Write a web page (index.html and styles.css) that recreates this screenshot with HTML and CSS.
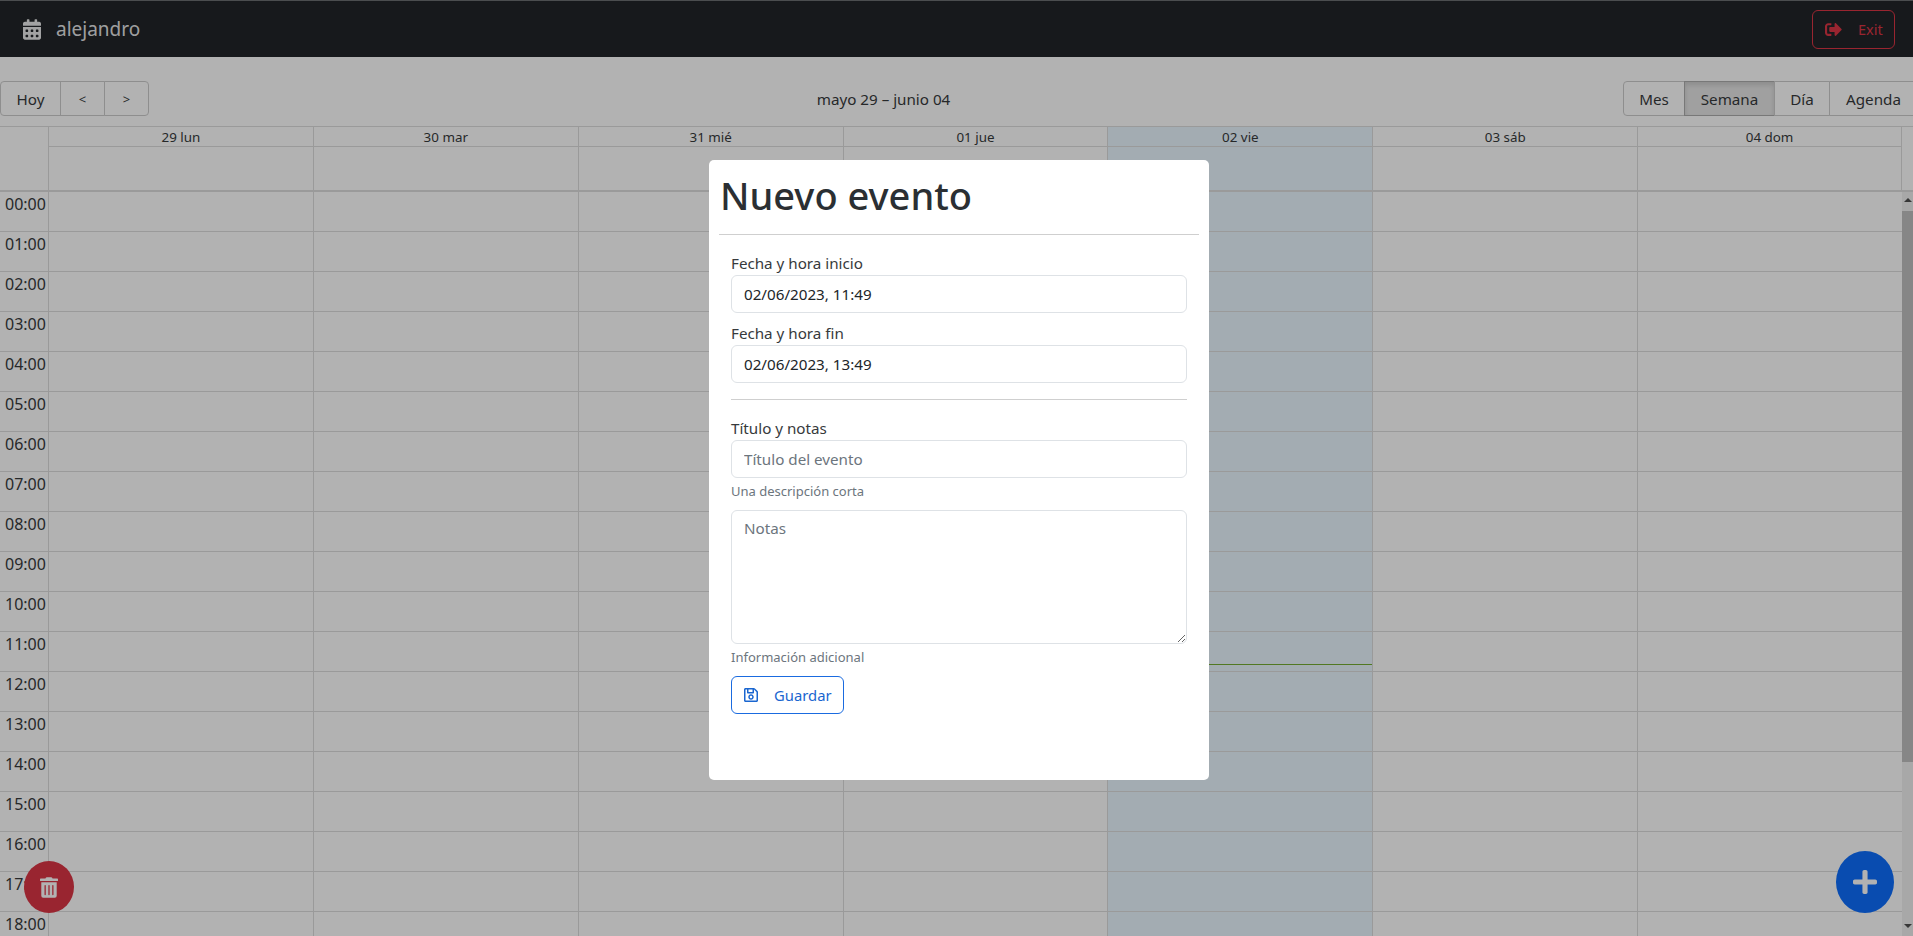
FILE: index.html
```html
<!DOCTYPE html>
<html lang="es">
<head>
<meta charset="UTF-8" />
<meta name="viewport" content="width=device-width, initial-scale=1.0" />
<title>Calendario</title>
<link rel="stylesheet" href="styles.css">
</head>
<body>
  <nav class="navbar">
    <span class="brand">
      <svg class="icon-calendar" viewBox="0 0 448 512"><path d="M0 464c0 26.500 21.500 48 48 48h352c26.500 0 48-21.500 48-48V192H0v272zm320-196c0-6.600 5.400-12 12-12h40c6.600 0 12 5.400 12 12v40c0 6.600-5.400 12-12 12h-40c-6.600 0-12-5.400-12-12v-40zm0 128c0-6.600 5.400-12 12-12h40c6.600 0 12 5.400 12 12v40c0 6.600-5.400 12-12 12h-40c-6.600 0-12-5.400-12-12v-40zM192 268c0-6.600 5.400-12 12-12h40c6.600 0 12 5.400 12 12v40c0 6.600-5.400 12-12 12h-40c-6.600 0-12-5.400-12-12v-40zm0 128c0-6.600 5.400-12 12-12h40c6.600 0 12 5.400 12 12v40c0 6.600-5.400 12-12 12h-40c-6.600 0-12-5.400-12-12v-40zM64 268c0-6.600 5.400-12 12-12h40c6.600 0 12 5.400 12 12v40c0 6.600-5.400 12-12 12H76c-6.600 0-12-5.400-12-12v-40zm0 128c0-6.600 5.400-12 12-12h40c6.600 0 12 5.400 12 12v40c0 6.600-5.400 12-12 12H76c-6.600 0-12-5.400-12-12v-40zM400 64h-48V16c0-8.800-7.200-16-16-16h-32c-8.800 0-16 7.200-16 16v48H160V16c0-8.800-7.200-16-16-16h-32c-8.800 0-16 7.200-16 16v48H48C21.500 64 0 85.500 0 112v48h448v-48c0-26.500-21.500-48-48-48z"/></svg>
      alejandro
    </span>
    <button class="btn-exit">
      <svg class="icon-exit" viewBox="0 0 512 512"><path d="M497 273L329 441c-15 15-41 4.500-41-17v-96H152c-13.300 0-24-10.700-24-24v-96c0-13.300 10.700-24 24-24h136V88c0-21.400 25.900-32 41-17l168 168c9.300 9.400 9.300 24.600 0 34zM192 436v-40c0-6.600-5.400-12-12-12H96c-17.700 0-32-14.300-32-32V160c0-17.700 14.300-32 32-32h84c6.600 0 12-5.400 12-12V76c0-6.600-5.400-12-12-12H96c-53 0-96 43-96 96v192c0 53 43 96 96 96h84c6.600 0 12-5.400 12-12z"/></svg>
      <span>Exit</span>
    </button>
  </nav>

  <div class="toolbar">
    <div class="btn-group">
      <button class="tool-btn btn-hoy">Hoy</button>
      <button class="tool-btn btn-arrow">&lt;</button>
      <button class="tool-btn btn-arrow">&gt;</button>
    </div>
    <span class="toolbar-label">mayo 29 – junio 04</span>
    <div class="btn-group">
      <button class="tool-btn btn-mes">Mes</button>
      <button class="tool-btn btn-semana active">Semana</button>
      <button class="tool-btn btn-dia">Día</button>
      <button class="tool-btn btn-agenda">Agenda</button>
    </div>
  </div>

  <div class="time-header">
    <div class="header-gutter"></div>
    <div class="header-day"><div class="header-date">29 lun</div><div class="header-allday"></div></div>
    <div class="header-day"><div class="header-date">30 mar</div><div class="header-allday"></div></div>
    <div class="header-day"><div class="header-date">31 mié</div><div class="header-allday"></div></div>
    <div class="header-day"><div class="header-date">01 jue</div><div class="header-allday"></div></div>
    <div class="header-day today"><div class="header-date">02 vie</div><div class="header-allday"></div></div>
    <div class="header-day"><div class="header-date">03 sáb</div><div class="header-allday"></div></div>
    <div class="header-day header-last"><div class="header-date">04 dom</div><div class="header-allday"></div></div>
  </div>

  <div class="time-body">
    <div class="gutter">
      <div class="slot">00:00</div>
      <div class="slot">01:00</div>
      <div class="slot">02:00</div>
      <div class="slot">03:00</div>
      <div class="slot">04:00</div>
      <div class="slot">05:00</div>
      <div class="slot">06:00</div>
      <div class="slot">07:00</div>
      <div class="slot">08:00</div>
      <div class="slot">09:00</div>
      <div class="slot">10:00</div>
      <div class="slot">11:00</div>
      <div class="slot">12:00</div>
      <div class="slot">13:00</div>
      <div class="slot">14:00</div>
      <div class="slot">15:00</div>
      <div class="slot">16:00</div>
      <div class="slot">17:00</div>
      <div class="slot">18:00</div>
    </div>
    <div class="days">
      <div class="day"></div>
      <div class="day"></div>
      <div class="day"></div>
      <div class="day"></div>
      <div class="day today"><div class="now-line"></div></div>
      <div class="day"></div>
      <div class="day"></div>
    </div>
    <div class="scrollbar">
      <span class="arrow-up"></span>
      <div class="thumb"></div>
      <span class="arrow-down"></span>
    </div>
  </div>

  <button class="fab fab-delete">
    <svg class="icon-trash" viewBox="0 0 448 512"><path d="M32 464a48 48 0 0 0 48 48h288a48 48 0 0 0 48-48V128H32zm272-256a16 16 0 0 1 32 0v224a16 16 0 0 1-32 0zm-96 0a16 16 0 0 1 32 0v224a16 16 0 0 1-32 0zm-96 0a16 16 0 0 1 32 0v224a16 16 0 0 1-32 0zM432 32H312l-9.400-18.700A24 24 0 0 0 281.100 0H166.800a23.720 23.720 0 0 0-21.400 13.300L136 32H16A16 16 0 0 0 0 48v32a16 16 0 0 0 16 16h416a16 16 0 0 0 16-16V48a16 16 0 0 0-16-16z"/></svg>
  </button>
  <button class="fab fab-add">
    <svg class="icon-plus" viewBox="0 0 448 512"><path d="M416 208H272V64c0-17.670-14.330-32-32-32h-32c-17.670 0-32 14.330-32 32v144H32c-17.670 0-32 14.330-32 32v32c0 17.670 14.330 32 32 32h144v144c0 17.670 14.330 32 32 32h32c17.670 0 32-14.330 32-32V304h144c17.670 0 32-14.330 32-32v-32c0-17.670-14.330-32-32-32z"/></svg>
  </button>

  <div class="overlay"></div>

  <div class="modal">
    <h1 class="modal-title">Nuevo evento</h1>
    <hr class="modal-rule" />
    <form class="event-form">
      <label class="form-label" for="start">Fecha y hora inicio</label>
      <input class="form-control" type="text" id="start" value="02/06/2023, 11:49" />
      <label class="form-label label-end" for="end">Fecha y hora fin</label>
      <input class="form-control" type="text" id="end" value="02/06/2023, 13:49" />
      <hr class="form-rule" />
      <label class="form-label" for="title">Título y notas</label>
      <input class="form-control" type="text" id="title" placeholder="Título del evento" />
      <small class="form-text">Una descripción corta</small>
      <textarea class="form-control form-notes" id="notes" placeholder="Notas"></textarea>
      <small class="form-text">Información adicional</small>
      <button class="btn-save" type="button">
        <svg class="icon-save" viewBox="0 0 448 512"><path d="M433.941 129.941l-83.882-83.882A48 48 0 0 0 316.118 32H48C21.490 32 0 53.490 0 80v352c0 26.510 21.490 48 48 48h352c26.510 0 48-21.490 48-48V163.882a48 48 0 0 0-14.059-33.941zM272 80v80H144V80h128zm122 352H54a6 6 0 0 1-6-6V86a6 6 0 0 1 6-6h42v104c0 13.255 10.745 24 24 24h176c13.255 0 24-10.745 24-24V83.882l78.243 78.243a6 6 0 0 1 1.757 4.243V426a6 6 0 0 1-6 6zM224 232c-48.523 0-88 39.477-88 88s39.477 88 88 88 88-39.477 88-88-39.477-88-88-88zm0 128c-22.056 0-40-17.944-40-40s17.944-40 40-40 40 17.944 40 40-17.944 40-40 40z"/></svg>
        <span>Guardar</span>
      </button>
    </form>
  </div>
</body>
</html>
```

FILE: styles.css
```css
* {
  box-sizing: border-box;
}

html, body {
  height: 100%;
}

body {
  margin: 0;
  overflow: hidden;
  font-family: "Noto Sans", sans-serif;
  font-size: 16px;
  color: #212529;
  background-color: #fff;
}

button {
  font-family: inherit;
}

/* navbar */
.navbar {
  height: 57px;
  display: flex;
  justify-content: space-between;
  align-items: center;
  padding: 0 18px 0 23px;
  background-color: #212529;
  border-top: 1px solid #6c6f72;
}

.brand {
  display: flex;
  align-items: center;
  gap: 15px;
  font-size: 19px;
  color: rgba(255, 255, 255, 0.9);
}

.icon-calendar {
  width: 18px;
  height: 21px;
  flex-shrink: 0;
  fill: rgba(255, 255, 255, 0.9);
}

.btn-exit {
  width: 83px;
  height: 39px;
  display: flex;
  align-items: center;
  gap: 16px;
  padding: 0 12px;
  font-size: 14.5px;
  color: #dc3545;
  background: transparent;
  border: 1px solid #dc3545;
  border-radius: 6px;
}

.icon-exit {
  width: 17px;
  height: 17px;
  flex-shrink: 0;
  fill: #dc3545;
}

/* toolbar */
.toolbar {
  display: flex;
  align-items: center;
  width: 1918px;
  margin-top: 24px;
  margin-bottom: 10px;
}

.toolbar-label {
  flex-grow: 1;
  padding-right: 5px;
  font-size: 15.2px;
  text-align: center;
  color: #373a3c;
}

.btn-group {
  display: flex;
}

.tool-btn {
  height: 35px;
  padding: 0;
  font-size: 15.2px;
  color: #373a3c;
  background: #fff;
  border: 1px solid #ccc;
  margin-left: -1px;
}

.btn-group .tool-btn:first-child {
  margin-left: 0;
  border-radius: 4px 0 0 4px;
}

.btn-group .tool-btn:last-child {
  border-radius: 0 4px 4px 0;
}

.btn-hoy { width: 61px; }
.btn-arrow { width: 45px; font-size: 13px; }
.btn-mes { width: 62px; }
.btn-semana { width: 91px; }
.btn-dia { width: 56px; }
.btn-agenda { width: 89px; }

.tool-btn.active {
  background-color: #e6e6e6;
  border-color: #adadad;
  box-shadow: inset 0 3px 5px rgba(0, 0, 0, 0.125);
}

/* calendar header */
.time-header {
  display: grid;
  grid-template-columns: 48px repeat(7, 1fr);
  padding-right: 11px;
  height: 66px;
  border-top: 1px solid #ddd;
  border-bottom: 2px solid #ddd;
}

.header-day {
  border-left: 1px solid #ddd;
}

.header-day.today {
  background-color: #eaf6ff;
}

.header-last {
  border-right: 1px solid #ddd;
}

.header-date {
  height: 20px;
  font-size: 13.4px;
  line-height: 20px;
  text-align: center;
  color: #373a3c;
  border-bottom: 1px solid #ddd;
}

/* calendar body */
.time-body {
  display: flex;
  height: 744px;
}

.gutter {
  width: 48px;
  flex-shrink: 0;
}

.slot {
  height: 40px;
  padding-top: 1px;
  padding-left: 5px;
  color: #373a3c;
  border-bottom: 1px solid #ddd;
}

.days {
  flex-grow: 1;
  display: grid;
  grid-template-columns: repeat(7, 1fr);
}

.day {
  position: relative;
  border-left: 1px solid #ddd;
  background: repeating-linear-gradient(to bottom, transparent 0, transparent 39px, #ddd 39px, #ddd 40px);
}

.day.today {
  background: repeating-linear-gradient(to bottom, transparent 0, transparent 39px, #ddd 39px, #ddd 40px), #eaf6ff;
}

.now-line {
  position: absolute;
  top: 472px;
  left: 0;
  right: 0;
  height: 1px;
  background-color: #74ad31;
}

.scrollbar {
  width: 11px;
  flex-shrink: 0;
  display: flex;
  flex-direction: column;
  align-items: center;
  background-color: #f1f1f1;
}

.arrow-up,
.arrow-down {
  flex-shrink: 0;
  width: 0;
  height: 0;
  border-left: 4px solid transparent;
  border-right: 4px solid transparent;
}

.arrow-up {
  margin: 6px 0 9px;
  border-bottom: 4px solid #505050;
}

.arrow-down {
  margin-top: 162px;
  border-top: 4px solid #505050;
}

.thumb {
  width: 100%;
  height: 551px;
  flex-shrink: 0;
  background-color: #c1c1c1;
}

/* round buttons */
.fab {
  position: fixed;
  display: flex;
  align-items: center;
  justify-content: center;
  padding: 0;
  border: none;
  border-radius: 100%;
}

.fab-delete {
  left: 24px;
  top: 861px;
  width: 50px;
  height: 52px;
  background-color: #dc3545;
}

.fab-add {
  left: 1836px;
  top: 851px;
  width: 58px;
  height: 62px;
  background-color: #0d6efd;
}

.icon-trash {
  width: 18px;
  height: 21px;
  fill: #fff;
}

.icon-plus {
  width: 24px;
  height: 28px;
  fill: #fff;
}

/* modal */
.overlay {
  position: fixed;
  top: 0;
  left: 0;
  right: 0;
  bottom: 0;
  background-color: rgba(0, 0, 0, 0.3);
}

.modal {
  position: fixed;
  left: 709px;
  top: 160px;
  width: 500px;
  height: 620px;
  padding: 10px;
  background-color: #fff;
  border-radius: 5px;
}

.modal-title {
  margin: 0 0 0 1px;
  height: 48px;
  font-size: 38px;
  font-weight: 500;
  line-height: 50px;
  color: #2b2f33;
}

.modal-rule {
  margin: 16px 0 0;
  border: none;
  border-top: 1px solid #cfcfcf;
}

.event-form {
  display: flex;
  flex-direction: column;
  align-items: flex-start;
  padding: 0 12px;
}

.form-label {
  margin-top: 18px;
  height: 22px;
  font-size: 15.2px;
  line-height: 20px;
  color: #373a3c;
}

.label-end {
  margin-top: 10px;
}

.form-control {
  width: 100%;
  height: 38px;
  padding: 0 12px;
  font-family: inherit;
  font-size: 15.2px;
  color: #212529;
  background: #fff;
  border: 1px solid #dee2e6;
  border-radius: 6px;
}

.form-control::placeholder {
  color: #6c757d;
}

.form-rule {
  width: 100%;
  margin: 16px 0 0;
  border: none;
  border-top: 1px solid #cfcfcf;
}

.form-text {
  height: 32px;
  padding-top: 3px;
  font-size: 13px;
  line-height: 20px;
  color: #6c757d;
}

.form-notes {
  height: 134px;
  padding-top: 5px;
  line-height: 24px;
}

.btn-save {
  width: 113px;
  height: 38px;
  display: flex;
  align-items: center;
  gap: 16px;
  padding: 0 12px;
  font-size: 14.8px;
  color: #1a66d0;
  background: #fff;
  border: 1px solid #1a6be0;
  border-radius: 6px;
}

.icon-save {
  width: 14px;
  height: 16px;
  flex-shrink: 0;
  fill: #1a66d0;
}
```
